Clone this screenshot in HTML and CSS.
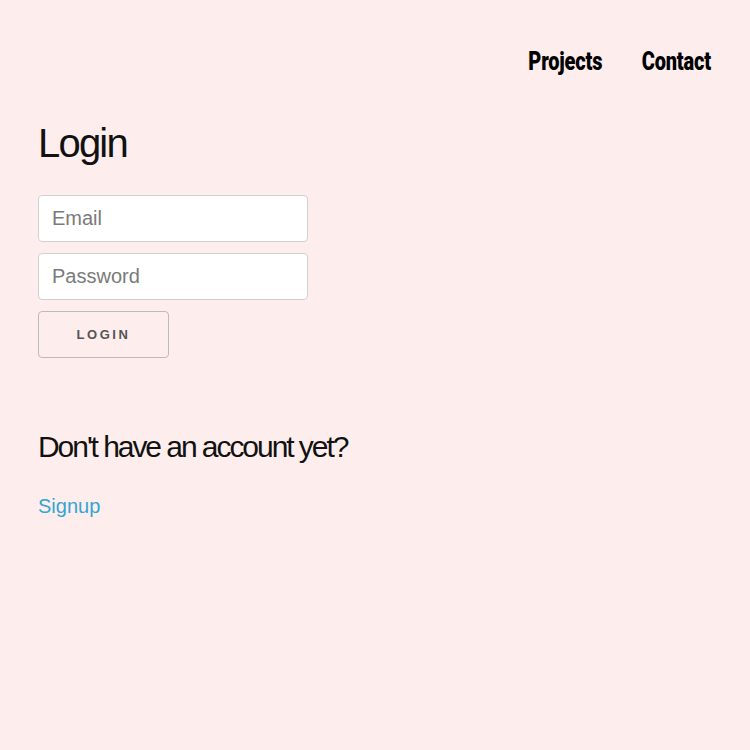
FILE: index.html
```html
<!DOCTYPE html>
<html lang="en">
<head>
<meta charset="utf-8">
<title>Login</title>
<link rel="stylesheet" href="styles.css">
</head>
<body>
<header class="nav">
  <a class="nav-link" href="#">Projects</a>
  <a class="nav-link" href="#">Contact</a>
</header>
<main class="content">
  <h1 class="title">Login</h1>
  <form class="login-form">
    <input class="field" type="email" placeholder="Email">
    <input class="field" type="password" placeholder="Password">
    <button class="btn" type="button">Login</button>
  </form>
  <h2 class="subtitle">Don't have an account yet?</h2>
  <a class="signup" href="#">Signup</a>
</main>
</body>
</html>
```
FILE: styles.css
```css
html, body {
  margin: 0;
  padding: 0;
}
body {
  background: #fdeeed;
  font-family: "Liberation Sans", Arial, sans-serif;
  color: #222;
}
.nav {
  display: flex;
  justify-content: flex-end;
  gap: 22px;
  padding: 47px 30px 0 0;
  height: 29px;
}
.nav-link {
  display: inline-block;
  font-family: "Roboto", sans-serif;
  font-weight: 900;
  font-size: 25px;
  color: #000;
  text-decoration: none;
  line-height: 30px;
  letter-spacing: -0.2px;
  transform: scaleX(0.8);
}
.content {
  padding: 0 38px;
}
.title {
  margin: 42px 0 27px;
  font-size: 40px;
  font-weight: 400;
  letter-spacing: -1.8px;
  line-height: 50px;
  color: #111;
}
.login-form {
  display: flex;
  flex-direction: column;
  align-items: flex-start;
  gap: 11px;
}
.field {
  box-sizing: border-box;
  width: 270px;
  height: 47px;
  padding: 6px 13px;
  border: 1px solid #d1d1d1;
  border-radius: 4px;
  background: #fff;
  font-family: "Liberation Sans", Arial, sans-serif;
  font-size: 20px;
  color: #333;
  outline: none;
}
.field::placeholder {
  color: #7a7a7a;
}
.btn {
  box-sizing: border-box;
  width: 131px;
  height: 47px;
  border: 1px solid #bbb;
  border-radius: 4px;
  background: transparent;
  font-family: "Liberation Sans", Arial, sans-serif;
  font-size: 13px;
  font-weight: 700;
  letter-spacing: 2.6px;
  text-transform: uppercase;
  color: #555;
  cursor: pointer;
}
.subtitle {
  margin: 71px 0 30px;
  font-size: 30px;
  font-weight: 400;
  letter-spacing: -2.05px;
  line-height: 36px;
  color: #111;
}
.signup {
  display: inline-block;
  font-size: 20px;
  color: #33a6d2;
  text-decoration: none;
}
```
